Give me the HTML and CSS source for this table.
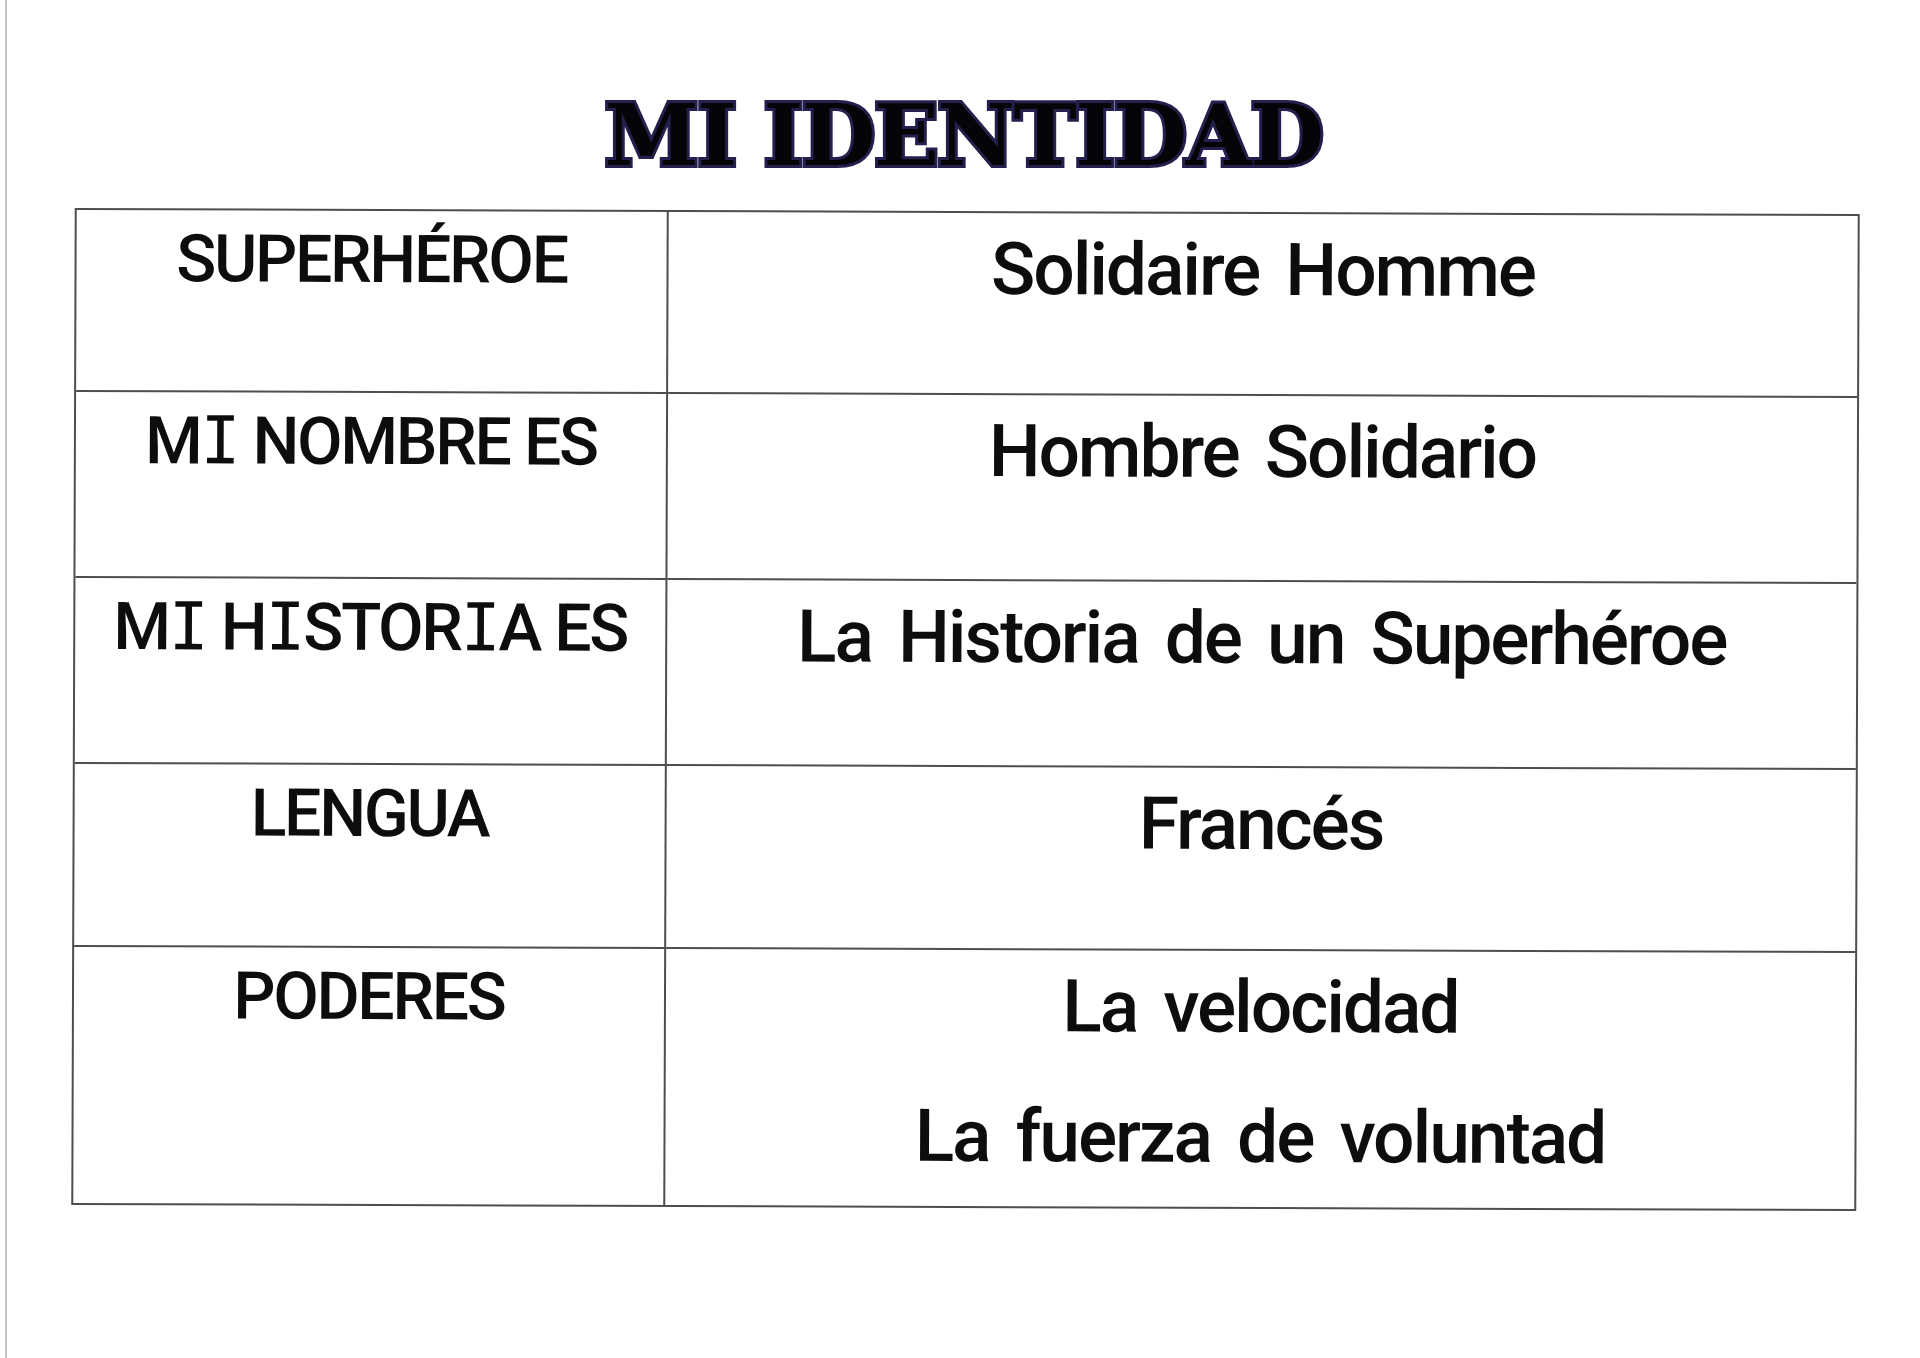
FILE: index.html
```html
<!DOCTYPE html>
<html lang="es">
<head>
<meta charset="utf-8">
<title>Mi identidad</title>
<link rel="stylesheet" href="styles.css">
</head>
<body>
<div class="page">
  <h1 class="title">MI IDENTIDAD</h1>
  <div class="sheet">
    <div class="cell label">SUPERHÉROE</div>
    <div class="cell value">Solidaire Homme</div>
    <div class="cell label">M<span class="i">I</span> NOMBRE ES</div>
    <div class="cell value">Hombre Solidario</div>
    <div class="cell label">M<span class="i">I</span> H<span class="i">I</span>STOR<span class="i">I</span>A ES</div>
    <div class="cell value">La Historia de un Superhéroe</div>
    <div class="cell label">LENGUA</div>
    <div class="cell value">Francés</div>
    <div class="cell label last">PODERES</div>
    <div class="cell value last multi">
      <span>La velocidad</span>
      <span>La fuerza de voluntad</span>
    </div>
  </div>
</div>
</body>
</html>
```
FILE: styles.css
```css
html, body {
  margin: 0;
  padding: 0;
  background: #ffffff;
}

.page {
  margin-left: 5px;
  border-left: 2px solid #c4c4c4;
  min-height: 1358px;
  box-sizing: border-box;
  padding-top: 93px;
  font-family: Roboto, "DejaVu Sans", sans-serif;
  color: #0d0d0d;
}

.title {
  margin: 0 0 33px 0;
  text-align: center;
  font-family: "DejaVu Serif", "Liberation Serif", serif;
  font-weight: 700;
  font-size: 85px;
  line-height: 1;
  letter-spacing: -1.5px;
  color: #050508;
  -webkit-text-stroke: 6px #24204d;
  paint-order: stroke fill;
}

.sheet {
  margin-left: 66px;
  width: 1785px;
  box-sizing: border-box;
  border: 2px solid #4e4e4e;
  display: grid;
  grid-template-columns: 592px 1189px;
  grid-template-rows: 182px 186px 186px 183px 256px;
  transform: rotate(0.2deg);
  transform-origin: 50% 50%;
}

.cell {
  box-sizing: border-box;
  text-align: center;
  line-height: 1;
  border-bottom: 2px solid #4e4e4e;
  font-weight: 500;
}

.cell.last {
  border-bottom: none;
}

.label {
  border-right: 2px solid #4e4e4e;
  font-size: 66px;
  letter-spacing: -2.2px;
  padding-top: 16px;
}

.label .i {
  font-family: "DejaVu Sans Mono", "Liberation Mono", monospace;
  font-weight: 400;
  letter-spacing: -6px;
  padding-right: 4px;
}

.value {
  font-size: 73px;
  letter-spacing: -2px;
  word-spacing: 10px;
  padding-top: 20px;
}

.multi {
  display: flex;
  flex-direction: column;
  align-items: center;
  gap: 57px;
}
```
